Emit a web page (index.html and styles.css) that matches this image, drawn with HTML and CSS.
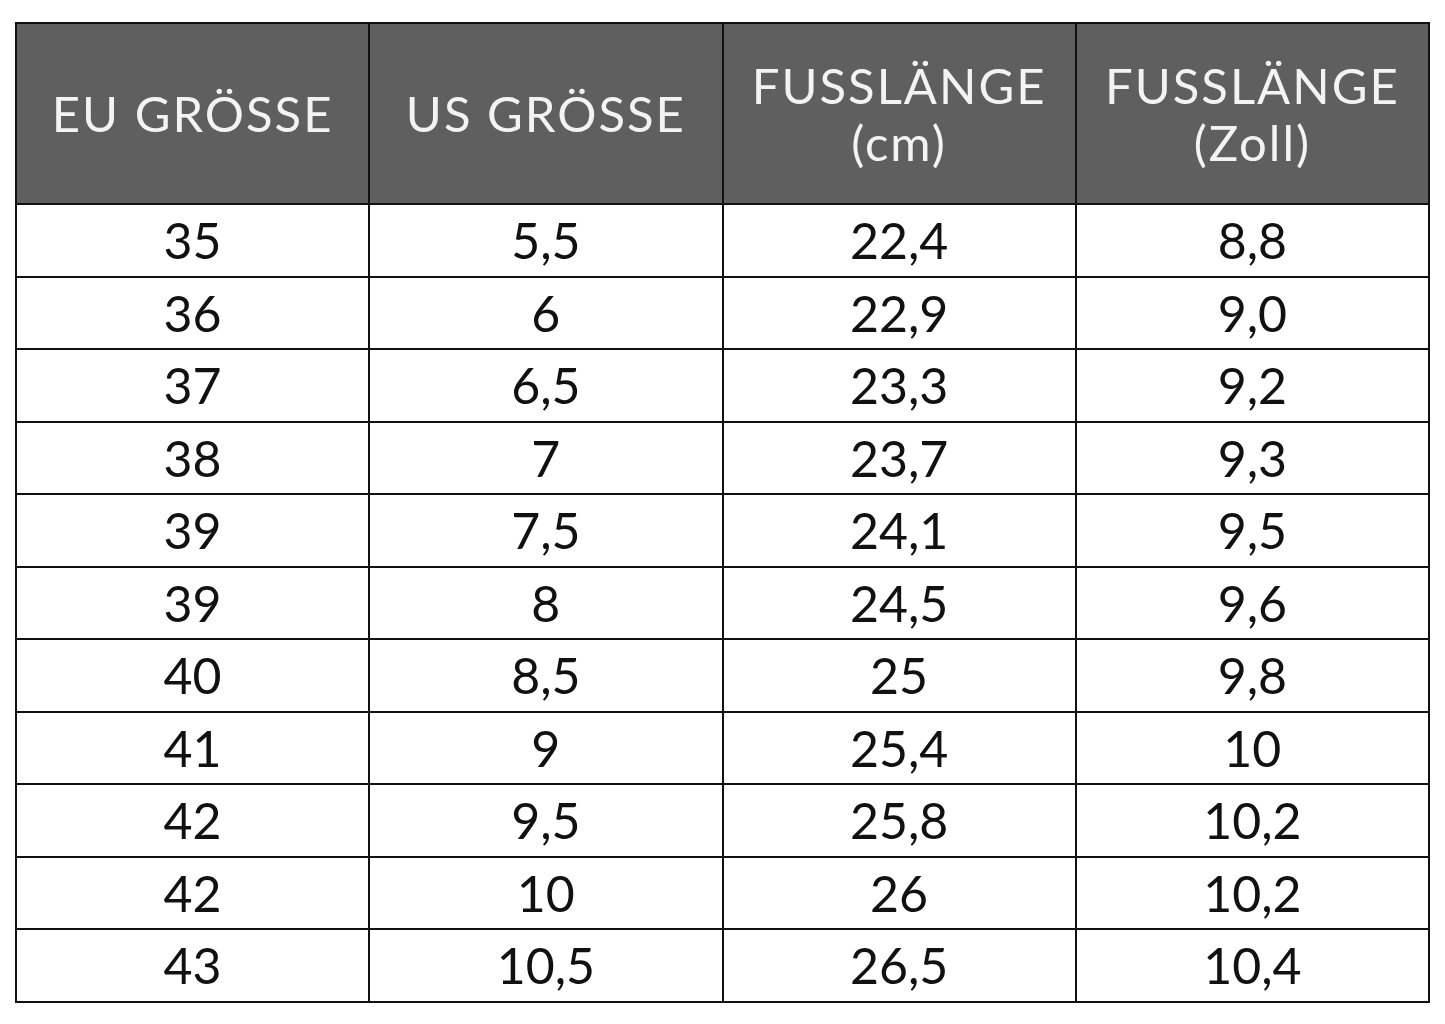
FILE: index.html
```html
<!DOCTYPE html>
<html lang="de">
<head>
<meta charset="utf-8">
<title>Größentabelle</title>
<link rel="stylesheet" href="styles.css">
</head>
<body>
<div class="page">
<table class="sizes">
  <thead>
    <tr>
      <th>EU GRÖSSE</th>
      <th>US GRÖSSE</th>
      <th>FUSSLÄNGE<br>(cm)</th>
      <th>FUSSLÄNGE<br>(Zoll)</th>
    </tr>
  </thead>
  <tbody>
    <tr><td>35</td><td>5,5</td><td>22,4</td><td>8,8</td></tr>
    <tr><td>36</td><td>6</td><td>22,9</td><td>9,0</td></tr>
    <tr><td>37</td><td>6,5</td><td>23,3</td><td>9,2</td></tr>
    <tr><td>38</td><td>7</td><td>23,7</td><td>9,3</td></tr>
    <tr><td>39</td><td>7,5</td><td>24,1</td><td>9,5</td></tr>
    <tr><td>39</td><td>8</td><td>24,5</td><td>9,6</td></tr>
    <tr><td>40</td><td>8,5</td><td>25</td><td>9,8</td></tr>
    <tr><td>41</td><td>9</td><td>25,4</td><td>10</td></tr>
    <tr><td>42</td><td>9,5</td><td>25,8</td><td>10,2</td></tr>
    <tr><td>42</td><td>10</td><td>26</td><td>10,2</td></tr>
    <tr><td>43</td><td>10,5</td><td>26,5</td><td>10,4</td></tr>
  </tbody>
</table>
</div>
</body>
</html>
```
FILE: styles.css
```css
html, body {
  margin: 0;
  padding: 0;
  background: #ffffff;
}
.page {
  padding: 22px 0 0 15px;
}
.sizes {
  width: 1415px;
  table-layout: fixed;
  border-collapse: collapse;
  border: 2px solid #111111;
  font-family: Lato, "Open Sans", sans-serif;
}
.sizes th,
.sizes td {
  border: 2px solid #111111;
  padding: 0;
  text-align: center;
  vertical-align: middle;
}
.sizes th {
  height: 179px;
  background: #5f5f5f;
  color: #f3f3f3;
  font-weight: 400;
  font-size: 49px;
  line-height: 57px;
  letter-spacing: 2px;
}
.sizes td {
  height: 70.5px;
  color: #111111;
  font-size: 50px;
  line-height: 1;
}
```
